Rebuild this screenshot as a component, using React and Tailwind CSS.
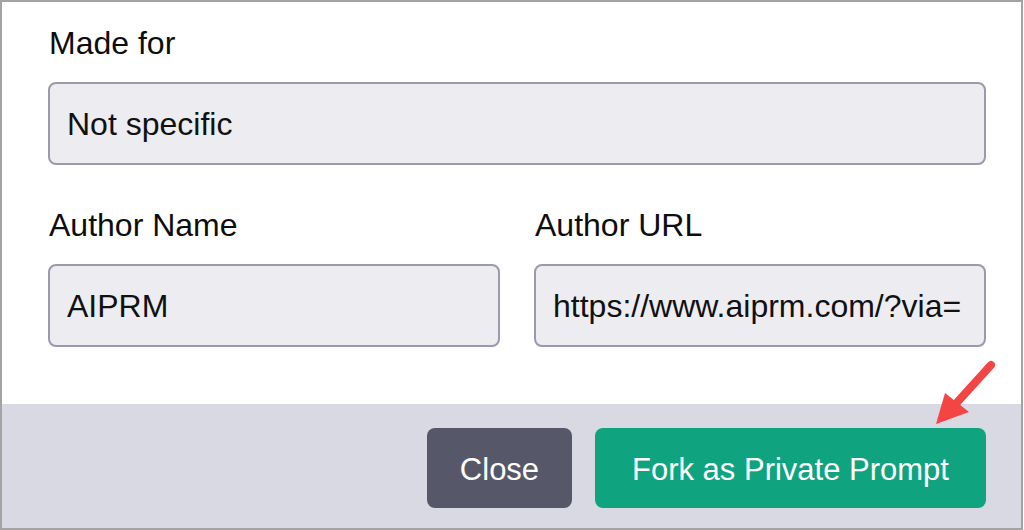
import React from 'react';

const font = { fontFamily: '"Liberation Sans", Arial, sans-serif' };

const Field = ({ label, value, className = '' }) => (
  <div className={`flex flex-col gap-[21px] ${className}`}>
    <label className="text-[32px] leading-[36px] text-[#0d0d0d] pl-px">{label}</label>
    <div className="h-[83px] rounded-[8px] border-2 border-[#9a9aad] bg-[#ececf1] flex items-center px-[17px] overflow-hidden whitespace-nowrap">
      <span className="text-[32px] text-[#111]">{value}</span>
    </div>
  </div>
);

export default function App() {
  return (
    <div style={font} className="relative w-[1023px] h-[530px] bg-white border-2 border-[#a3a3a3] flex flex-col overflow-hidden">
      <div className="flex flex-col pl-[46px] pr-[35px] pt-[23px] gap-[42px] h-[402px]">
        <Field label="Made for" value="Not specific" />
        <div className="flex gap-[34px]">
          <Field label="Author Name" value="AIPRM" className="flex-1" />
          <Field label="Author URL" value="https://www.aiprm.com/?via=" className="flex-1" />
        </div>
      </div>
      <div className="flex-1 bg-[#d9d9e3] flex justify-end items-start gap-[23px] pt-[24px] pr-[35px]">
        <button className="w-[145px] h-[80px] rounded-[8px] bg-[#565869] text-white text-[31px] pt-[4px]">
          Close
        </button>
        <button className="w-[391px] h-[80px] rounded-[8px] bg-[#10a37f] text-white text-[31px] pt-[4px]">
          Fork as Private Prompt
        </button>
      </div>
      <svg className="absolute left-[920px] top-[350px]" width="90" height="80" viewBox="0 0 90 80">
        <path d="M69 13 L30 56" stroke="#f44444" strokeWidth="8" strokeLinecap="round" fill="none" />
        <path d="M14 72 L23 41 L47 60 Z" fill="#f44444" />
      </svg>
    </div>
  );
}
